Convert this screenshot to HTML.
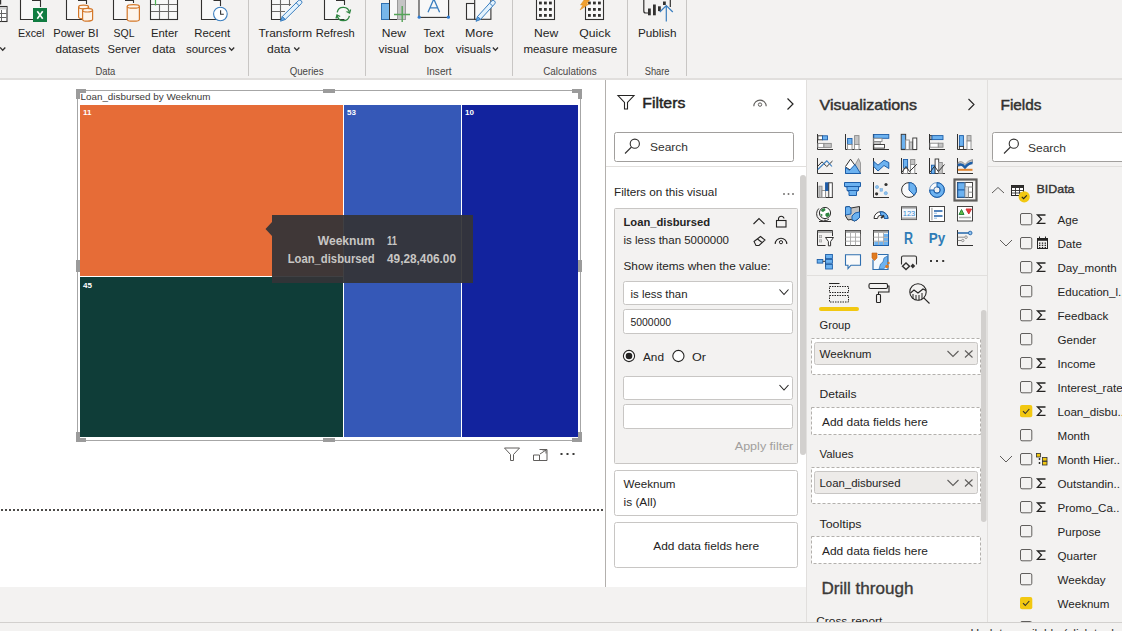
<!DOCTYPE html>
<html><head><meta charset="utf-8"><title>Power BI</title>
<style>
html,body{margin:0;padding:0;width:1122px;height:631px;overflow:hidden;background:#f3f2f1;}
svg{display:block;font-family:"Liberation Sans",sans-serif;}
</style></head><body>
<svg width="1122" height="631" viewBox="0 0 1122 631">
<rect x="0" y="0" width="1122" height="631" fill="#f3f2f1" rx="0" />
<rect x="0" y="78" width="1122" height="2" fill="#e1dfdd" rx="0" />
<rect x="0" y="80" width="605" height="507" fill="#ffffff" rx="0" />
<rect x="606" y="80" width="200" height="507" fill="#ffffff" rx="0" />
<rect x="605" y="80" width="1" height="507" fill="#b3b0ad" rx="0" />
<rect x="806" y="80" width="1" height="542" fill="#e1dfdd" rx="0" />
<rect x="987" y="80" width="1" height="542" fill="#e1dfdd" rx="0" />
<text x="18.1" y="36.8" font-size="11.6" fill="#252423" font-weight="normal" text-anchor="start" textLength="26.4" lengthAdjust="spacingAndGlyphs" >Excel</text>
<text x="53.2" y="36.8" font-size="11.6" fill="#252423" font-weight="normal" text-anchor="start" textLength="45.3" lengthAdjust="spacingAndGlyphs" >Power BI</text>
<text x="55.4" y="52.5" font-size="11.6" fill="#252423" font-weight="normal" text-anchor="start" textLength="44.1" lengthAdjust="spacingAndGlyphs" >datasets</text>
<text x="113.5" y="36.8" font-size="11.6" fill="#252423" font-weight="normal" text-anchor="start" textLength="21" lengthAdjust="spacingAndGlyphs" >SQL</text>
<text x="107.5" y="52.5" font-size="11.6" fill="#252423" font-weight="normal" text-anchor="start" textLength="33" lengthAdjust="spacingAndGlyphs" >Server</text>
<text x="151.0" y="36.8" font-size="11.6" fill="#252423" font-weight="normal" text-anchor="start" textLength="27.0" lengthAdjust="spacingAndGlyphs" >Enter</text>
<text x="152.3" y="52.5" font-size="11.6" fill="#252423" font-weight="normal" text-anchor="start" textLength="23.2" lengthAdjust="spacingAndGlyphs" >data</text>
<text x="194.2" y="36.8" font-size="11.6" fill="#252423" font-weight="normal" text-anchor="start" textLength="36.0" lengthAdjust="spacingAndGlyphs" >Recent</text>
<text x="185.9" y="52.5" font-size="11.6" fill="#252423" font-weight="normal" text-anchor="start" textLength="40.4" lengthAdjust="spacingAndGlyphs" >sources</text>
<text x="258.5" y="36.8" font-size="11.6" fill="#252423" font-weight="normal" text-anchor="start" textLength="53.5" lengthAdjust="spacingAndGlyphs" >Transform</text>
<text x="267.0" y="52.5" font-size="11.6" fill="#252423" font-weight="normal" text-anchor="start" textLength="23.5" lengthAdjust="spacingAndGlyphs" >data</text>
<text x="315.7" y="36.8" font-size="11.6" fill="#252423" font-weight="normal" text-anchor="start" textLength="39.0" lengthAdjust="spacingAndGlyphs" >Refresh</text>
<text x="381.8" y="36.8" font-size="11.6" fill="#252423" font-weight="normal" text-anchor="start" textLength="24.1" lengthAdjust="spacingAndGlyphs" >New</text>
<text x="378.5" y="52.5" font-size="11.6" fill="#252423" font-weight="normal" text-anchor="start" textLength="30.5" lengthAdjust="spacingAndGlyphs" >visual</text>
<text x="423.5" y="36.8" font-size="11.6" fill="#252423" font-weight="normal" text-anchor="start" textLength="20.8" lengthAdjust="spacingAndGlyphs" >Text</text>
<text x="424.3" y="52.5" font-size="11.6" fill="#252423" font-weight="normal" text-anchor="start" textLength="19.5" lengthAdjust="spacingAndGlyphs" >box</text>
<text x="465.1" y="36.8" font-size="11.6" fill="#252423" font-weight="normal" text-anchor="start" textLength="28.4" lengthAdjust="spacingAndGlyphs" >More</text>
<text x="455.7" y="52.5" font-size="11.6" fill="#252423" font-weight="normal" text-anchor="start" textLength="35.3" lengthAdjust="spacingAndGlyphs" >visuals</text>
<text x="534.1" y="36.8" font-size="11.6" fill="#252423" font-weight="normal" text-anchor="start" textLength="24.2" lengthAdjust="spacingAndGlyphs" >New</text>
<text x="523.4" y="52.5" font-size="11.6" fill="#252423" font-weight="normal" text-anchor="start" textLength="44.7" lengthAdjust="spacingAndGlyphs" >measure</text>
<text x="579.3" y="36.8" font-size="11.6" fill="#252423" font-weight="normal" text-anchor="start" textLength="31.2" lengthAdjust="spacingAndGlyphs" >Quick</text>
<text x="572.2" y="52.5" font-size="11.6" fill="#252423" font-weight="normal" text-anchor="start" textLength="45.0" lengthAdjust="spacingAndGlyphs" >measure</text>
<text x="637.9" y="36.8" font-size="11.6" fill="#252423" font-weight="normal" text-anchor="start" textLength="38.6" lengthAdjust="spacingAndGlyphs" >Publish</text>
<text x="95.4" y="75" font-size="10" fill="#484644" font-weight="normal" text-anchor="start" textLength="19.9" lengthAdjust="spacingAndGlyphs" >Data</text>
<text x="289.7" y="75" font-size="10" fill="#484644" font-weight="normal" text-anchor="start" textLength="33.9" lengthAdjust="spacingAndGlyphs" >Queries</text>
<text x="426.5" y="75" font-size="10" fill="#484644" font-weight="normal" text-anchor="start" textLength="25.1" lengthAdjust="spacingAndGlyphs" >Insert</text>
<text x="543.2" y="75" font-size="10" fill="#484644" font-weight="normal" text-anchor="start" textLength="53.5" lengthAdjust="spacingAndGlyphs" >Calculations</text>
<text x="644.7" y="75" font-size="10" fill="#484644" font-weight="normal" text-anchor="start" textLength="24.8" lengthAdjust="spacingAndGlyphs" >Share</text>
<rect x="248" y="0" width="1" height="76" fill="#c8c6c4" rx="0" />
<rect x="365" y="0" width="1" height="76" fill="#c8c6c4" rx="0" />
<rect x="512" y="0" width="1" height="76" fill="#c8c6c4" rx="0" />
<rect x="627" y="0" width="1" height="76" fill="#c8c6c4" rx="0" />
<rect x="686" y="0" width="1" height="76" fill="#c8c6c4" rx="0" />
<path d="M0.10000000000000009,47.5 L2.7,50.3 L5.300000000000001,47.5" stroke="#323130" fill="none" stroke-width="1.3" />
<path d="M229.0,47.5 L231.6,50.3 L234.2,47.5" stroke="#323130" fill="none" stroke-width="1.3" />
<path d="M294.2,47.5 L296.8,50.3 L299.40000000000003,47.5" stroke="#323130" fill="none" stroke-width="1.3" />
<path d="M492.79999999999995,47.5 L495.4,50.3 L498.0,47.5" stroke="#323130" fill="none" stroke-width="1.3" />
<rect x="-3" y="6.5" width="10" height="15" fill="#ffffff" stroke="#323130" stroke-width="1.1" rx="0" />
<rect x="-3" y="7" width="9.5" height="2.5" fill="#cfcfcf" rx="0" />
<path d="M1.5,10 V21.5 M-3,13.5 H6.5 M-3,17.5 H6.5" stroke="#666" fill="none" stroke-width="1" />
<path d="M20,-2 V19.5 H33 V8 H40.5 V-2 Z" fill="#f8f8f8"/>
<path d="M20.5,-1 V19.5 H33" stroke="#323130" fill="none" stroke-width="1.1" />
<path d="M40.5,7 V0.5 H32" stroke="#323130" fill="none" stroke-width="1.1" />
<rect x="33" y="8" width="14" height="14" fill="#107c41" rx="0" />
<path d="M37.3,11.2 L42.7,18.8 M42.7,11.2 L37.3,18.8" stroke="#ffffff" fill="none" stroke-width="1.6" />
<path d="M66,-2 V20 H87 V-2 Z" fill="#f8f8f8" stroke="none"/>
<path d="M66.5,-1 V19.5 H86.5" stroke="#323130" fill="none" stroke-width="1.1" />
<path d="M86.5,4 V0.5 H78" stroke="#323130" fill="none" stroke-width="1.1" />
<path d="M78.6,7.0 V17.0 A5.0,1.8 0 0 0 88.6,17.0 V7.0 A5.0,1.8 0 0 0 78.6,7.0 Z" fill="#fdf5ec" stroke="#d4782a" stroke-width="1.2"/>
<path d="M78.6,7.0 A5.0,1.8 0 0 0 88.6,7.0" fill="none" stroke="#d4782a" stroke-width="1.2"/>
<path d="M82.6,10.200000000000001 V19.4 A5.0,1.8 0 0 0 92.6,19.4 V10.200000000000001 A5.0,1.8 0 0 0 82.6,10.200000000000001 Z" fill="#fdf5ec" stroke="#d4782a" stroke-width="1.2"/>
<path d="M82.6,10.200000000000001 A5.0,1.8 0 0 0 92.6,10.200000000000001" fill="none" stroke="#d4782a" stroke-width="1.2"/>
<path d="M113,-2 V20 H134 V-2 Z" fill="#f8f8f8" stroke="none"/>
<path d="M113.5,-1 V19.5 H133.5" stroke="#323130" fill="none" stroke-width="1.1" />
<path d="M133.5,3 V0.5 H125" stroke="#323130" fill="none" stroke-width="1.1" />
<path d="M127.2,6.3999999999999995 V19.4 A6.100000000000001,1.8 0 0 0 139.4,19.4 V6.3999999999999995 A6.100000000000001,1.8 0 0 0 127.2,6.3999999999999995 Z" fill="#fdf5ec" stroke="#d4782a" stroke-width="1.2"/>
<path d="M127.2,6.3999999999999995 A6.100000000000001,1.8 0 0 0 139.4,6.3999999999999995" fill="none" stroke="#d4782a" stroke-width="1.2"/>
<rect x="150.5" y="-3" width="27" height="22.5" fill="#f8f8f8" stroke="#323130" stroke-width="1.1" rx="0" />
<path d="M151,4.5 H177 M151,11.5 H177 M159.5,4.5 V19 M168.5,-2 V19" stroke="#6b6a69" fill="none" stroke-width="1.1" />
<path d="M155.5,0 V5.5" stroke="#4caf50" fill="none" stroke-width="1.2" />
<path d="M201,-2 V20 H221 V-2 Z" fill="#f8f8f8" stroke="none"/>
<path d="M201.5,-1 V19.5 H220.5" stroke="#323130" fill="none" stroke-width="1.1" />
<path d="M220.5,6 V0.5 H213.5" stroke="#323130" fill="none" stroke-width="1.1" />
<circle cx="220.4" cy="14" r="6.8" fill="#ffffff" stroke="#3a7ebf" stroke-width="1.1"/>
<path d="M220.6,10.3 V14.3 H223.8" stroke="#323130" fill="none" stroke-width="1.1" />
<path d="M271,-2 V19.5 H291 V-2 Z" fill="#f8f8f8"/>
<path d="M271.5,-1 V19.5 H283" stroke="#323130" fill="none" stroke-width="1.1" />
<path d="M272,4.5 H291 M272,11.5 H285 M280.5,-1 V19 M289.5,-1 V6" stroke="#6b6a69" fill="none" stroke-width="1.1" />
<path d="M285.18,19.54 L301.27,3.70 A2.1,2.1 0 0 0 298.33,0.70 L282.23,16.55 Z" fill="#e3f2fd" stroke="#3a7ebf" stroke-width="1"/>
<path d="M280.50,21.20 L285.18,19.54 L282.23,16.55 Z" fill="#64a8e6" stroke="#3a7ebf" stroke-width="1"/>
<path d="M299.14,5.80 L296.19,2.81" stroke="#3a7ebf" fill="none" stroke-width="1" />
<path d="M324,-2 V20 H345 V-2 Z" fill="#f8f8f8" stroke="none"/>
<path d="M324.5,-1 V19.5 H344.5" stroke="#323130" fill="none" stroke-width="1.1" />
<path d="M344.5,5 V0.5 H336" stroke="#323130" fill="none" stroke-width="1.1" />
<path d="M337.2,12.3 A6.2,6.2 0 0 1 349.4,12.8" fill="none" stroke="#2e8540" stroke-width="1.3"/>
<path d="M349.4,15.8 A6.2,6.2 0 0 1 337.2,15.3" fill="none" stroke="#2e8540" stroke-width="1.3"/>
<path d="M346.5,11.5 L349.6,13 L350.6,9.5" stroke="#2e8540" fill="none" stroke-width="1.3" />
<path d="M340.2,16.5 L337,15 L336,18.5" stroke="#2e8540" fill="none" stroke-width="1.3" />
<rect x="381.5" y="3.5" width="8" height="16" fill="#77b6ea" stroke="#2f6fb0" stroke-width="1" rx="0" />
<rect x="389.5" y="-2" width="8" height="21.5" fill="#f8f8f8" stroke="#323130" stroke-width="1" rx="0" />
<rect x="397.5" y="-2" width="8" height="21.5" fill="#c4c4c4" stroke="#9a9a9a" stroke-width="1" rx="0" />
<path d="M394,14.5 H410 M402.2,6 V22" stroke="#54a357" fill="none" stroke-width="1.4" />
<rect x="419" y="-3" width="29.6" height="20.4" fill="#f8f8f8" stroke="#323130" stroke-width="1.1" rx="0" />
<path d="M428,12.2 L433.8,-1 L439.6,12.2 M430,7.8 H437.6" stroke="#3a7ebf" fill="none" stroke-width="1.3" />
<circle cx="419.2" cy="17.2" r="1.6" fill="#2f7bd0"/><circle cx="448.4" cy="17.2" r="1.6" fill="#2f7bd0"/>
<rect x="466.5" y="3.5" width="8.2" height="15.8" fill="#f8f8f8" stroke="#323130" stroke-width="1.1" rx="0" />
<rect x="474.7" y="-2" width="16.2" height="21.3" fill="#f8f8f8" stroke="#323130" stroke-width="1.1" rx="0" />
<path d="M480.58,19.39 L494.75,3.81 A2.1,2.1 0 0 0 491.65,0.99 L477.48,16.56 Z" fill="#e3f2fd" stroke="#3a7ebf" stroke-width="1"/>
<path d="M476.00,21.30 L480.58,19.39 L477.48,16.56 Z" fill="#64a8e6" stroke="#3a7ebf" stroke-width="1"/>
<path d="M492.73,6.03 L489.63,3.21" stroke="#3a7ebf" fill="none" stroke-width="1" />
<rect x="536.5" y="-3" width="18" height="22.5" fill="#f8f8f8" stroke="#323130" stroke-width="1.1" rx="0" />
<rect x="539" y="1.6" width="2.8" height="2.8" fill="#323130" rx="0" />
<rect x="544" y="1.6" width="2.8" height="2.8" fill="#323130" rx="0" />
<rect x="549" y="1.6" width="2.8" height="2.8" fill="#323130" rx="0" />
<rect x="539" y="8" width="2.8" height="2.8" fill="#323130" rx="0" />
<rect x="544" y="8" width="2.8" height="2.8" fill="#323130" rx="0" />
<rect x="549" y="8" width="2.8" height="2.8" fill="#323130" rx="0" />
<rect x="539" y="14" width="2.8" height="2.8" fill="#323130" rx="0" />
<rect x="544" y="14" width="2.8" height="2.8" fill="#323130" rx="0" />
<rect x="549" y="14" width="2.8" height="2.8" fill="#323130" rx="0" />
<rect x="585.5" y="-3" width="18" height="22.5" fill="#f8f8f8" stroke="#323130" stroke-width="1.1" rx="0" />
<rect x="588" y="1.6" width="2.8" height="2.8" fill="#323130" rx="0" />
<rect x="593" y="1.6" width="2.8" height="2.8" fill="#323130" rx="0" />
<rect x="598" y="1.6" width="2.8" height="2.8" fill="#323130" rx="0" />
<rect x="588" y="8" width="2.8" height="2.8" fill="#323130" rx="0" />
<rect x="593" y="8" width="2.8" height="2.8" fill="#323130" rx="0" />
<rect x="598" y="8" width="2.8" height="2.8" fill="#323130" rx="0" />
<rect x="588" y="14" width="2.8" height="2.8" fill="#323130" rx="0" />
<rect x="593" y="14" width="2.8" height="2.8" fill="#323130" rx="0" />
<rect x="598" y="14" width="2.8" height="2.8" fill="#323130" rx="0" />
<path d="M584,0 L589.5,0 L586.5,4 L589,4 L580,10 L583,5 L580.5,5 Z" fill="#f0a030" stroke="#d88a20" stroke-width="0.5"/>
<path d="M643.8,-1 V11 Q643.8,13 645.8,13 H648" stroke="#323130" fill="none" stroke-width="1.2" />
<path d="M670.3,-1 V7" stroke="#323130" fill="none" stroke-width="1.2" />
<rect x="648" y="8.5" width="2.8" height="6.8" fill="#323130" rx="0" />
<rect x="653" y="4.5" width="2.8" height="10.8" fill="#323130" rx="0" />
<rect x="658" y="6.3" width="2.8" height="4.8" fill="#323130" rx="0" />
<rect x="663" y="1.5" width="2.8" height="3.5" fill="#323130" rx="0" />
<path d="M666.3,5.5 V21.5 M659.8,12 L666.3,5.5 L672.8,12" stroke="#3a7ebf" fill="none" stroke-width="1.2" />
<rect x="0" y="0" width="1.2" height="4.5" fill="#323130" rx="0" />
<line x1="0" y1="510" x2="603" y2="510" stroke="#4d4b49" stroke-width="2" stroke-dasharray="2,2" stroke-dashoffset="3"/>
<text x="80.5" y="99.8" font-size="9.6" fill="#3b3a39" font-weight="normal" text-anchor="start" textLength="130" lengthAdjust="spacingAndGlyphs" >Loan_disbursed by Weeknum</text>
<rect x="77.5" y="90.5" width="503" height="350" fill="none" stroke="#a6a6a6" stroke-width="1" rx="0" />
<rect x="80" y="105" width="263" height="171" fill="#e66c37" rx="0" />
<rect x="80" y="277" width="263" height="160" fill="#0f3d38" rx="0" />
<rect x="344" y="105" width="117" height="332" fill="#3558b7" rx="0" />
<rect x="462" y="105" width="116" height="332" fill="#12239e" rx="0" />
<text x="83" y="115" font-size="8" fill="#ffffff" font-weight="bold" text-anchor="start" >11</text>
<text x="347" y="115" font-size="8" fill="#ffffff" font-weight="bold" text-anchor="start" >53</text>
<text x="465" y="115" font-size="8" fill="#ffffff" font-weight="bold" text-anchor="start" >10</text>
<text x="83" y="288" font-size="8" fill="#ffffff" font-weight="bold" text-anchor="start" >45</text>
<rect x="76" y="89" width="10" height="4" fill="#9b9b9b" rx="0" />
<rect x="76" y="89" width="4" height="10" fill="#9b9b9b" rx="0" />
<rect x="323" y="89" width="12" height="4" fill="#9b9b9b" rx="0" />
<rect x="572" y="89" width="10" height="4" fill="#9b9b9b" rx="0" />
<rect x="578" y="89" width="4" height="10" fill="#9b9b9b" rx="0" />
<rect x="76" y="260" width="4" height="12" fill="#9b9b9b" rx="0" />
<rect x="578" y="260" width="4" height="12" fill="#9b9b9b" rx="0" />
<rect x="76" y="432" width="4" height="10" fill="#9b9b9b" rx="0" />
<rect x="76" y="438" width="10" height="4" fill="#9b9b9b" rx="0" />
<rect x="323" y="438" width="12" height="4" fill="#9b9b9b" rx="0" />
<rect x="578" y="432" width="4" height="10" fill="#9b9b9b" rx="0" />
<rect x="572" y="438" width="10" height="4" fill="#9b9b9b" rx="0" />
<path d="M272,215 H473 V283 H272 V236 L265.5,229 L272,222 Z" fill="rgb(52,52,55)" fill-opacity="0.94"/>
<text x="374.7" y="245" font-size="12.4" fill="#c8c6c4" font-weight="bold" text-anchor="end" textLength="57" lengthAdjust="spacingAndGlyphs" >Weeknum</text>
<text x="374.7" y="263" font-size="12.4" fill="#c8c6c4" font-weight="bold" text-anchor="end" textLength="87" lengthAdjust="spacingAndGlyphs" >Loan_disbursed</text>
<text x="387" y="245" font-size="12.4" fill="#c8c6c4" font-weight="bold" text-anchor="start" textLength="10" lengthAdjust="spacingAndGlyphs" >11</text>
<text x="387" y="263" font-size="12.4" fill="#c8c6c4" font-weight="bold" text-anchor="start" textLength="69" lengthAdjust="spacingAndGlyphs" >49,28,406.00</text>
<path d="M504.5,448 H519.5 L513.5,454.5 V460.5 H510.5 V454.5 Z" stroke="#605e5c" fill="none" stroke-width="1" />
<path d="M533.5,455 V460.5 H547 V449.5 H539.5 M533.5,455 H539.5 V460.5 M540,454 L546,450 M542.5,450 H546 V453.5" stroke="#605e5c" fill="none" stroke-width="1" />
<rect x="560.5" y="453" width="2" height="2" fill="#3b3a39" rx="0" />
<rect x="566.5" y="453" width="2" height="2" fill="#3b3a39" rx="0" />
<rect x="572.5" y="453" width="2" height="2" fill="#3b3a39" rx="0" />
<path d="M618,95.5 H634 L627.5,102.5 V109 H624.5 V102.5 Z" stroke="#252423" fill="none" stroke-width="1.1" />
<text x="642.3" y="107.7" font-size="14.3" fill="#252423" font-weight="normal" text-anchor="start" textLength="43" lengthAdjust="spacingAndGlyphs" stroke="#252423" stroke-width="0.45">Filters</text>
<path d="M753.8,106.3 A6.2,6.2 0 0 1 766.2,106.3" stroke="#605e5c" fill="none" stroke-width="1.1" />
<circle cx="760" cy="104.6" r="1.7" fill="none" stroke="#605e5c" stroke-width="1"/>
<path d="M787.5,98.5 L793,104 L787.5,109.5" stroke="#252423" fill="none" stroke-width="1.2" />
<rect x="614.5" y="132.5" width="179" height="29" fill="#ffffff" stroke="#a19f9d" stroke-width="1" rx="2" />
<circle cx="634.8" cy="143.7" r="4.6" fill="none" stroke="#323130" stroke-width="1.1"/>
<path d="M631.5,147 L625,153.5" stroke="#323130" fill="none" stroke-width="1.1" />
<text x="650" y="150.7" font-size="11.6" fill="#323130" font-weight="normal" text-anchor="start" textLength="38" lengthAdjust="spacingAndGlyphs" >Search</text>
<rect x="606" y="166" width="200" height="1" fill="#e1dfdd" rx="0" />
<text x="614" y="196" font-size="11.6" fill="#252423" font-weight="normal" text-anchor="start" textLength="103" lengthAdjust="spacingAndGlyphs" >Filters on this visual</text>
<rect x="783.2" y="193.2" width="1.6" height="1.6" fill="#605e5c" rx="0" />
<rect x="787.7" y="193.2" width="1.6" height="1.6" fill="#605e5c" rx="0" />
<rect x="792.2" y="193.2" width="1.6" height="1.6" fill="#605e5c" rx="0" />
<rect x="800" y="175" width="6" height="280" fill="#d2d0ce" rx="3" />
<rect x="614.5" y="208.5" width="183" height="255" fill="#f3f2f1" stroke="#c8c6c4" stroke-width="1" rx="1" />
<text x="623.5" y="226" font-size="11.6" fill="#252423" font-weight="bold" text-anchor="start" textLength="86.5" lengthAdjust="spacingAndGlyphs" >Loan_disbursed</text>
<text x="623.5" y="244" font-size="11.6" fill="#252423" font-weight="normal" text-anchor="start" textLength="105.5" lengthAdjust="spacingAndGlyphs" >is less than 5000000</text>
<path d="M753.5,224 L759,218.5 L764.5,224" stroke="#252423" fill="none" stroke-width="1.1" />
<rect x="776.5" y="220.5" width="9.5" height="6.5" fill="none" stroke="#252423" stroke-width="1.1"/>
<path d="M778.5,220.5 V218.5 A2.8,2.8 0 0 1 784,218.5" stroke="#252423" fill="none" stroke-width="1.1" />
<path d="M754,241.5 L760.5,236.5 L765,240 L759,245.5 H756 Z M757.5,239 L762,242.5" stroke="#252423" fill="none" stroke-width="1.05" />
<path d="M775.2,244 A5.8,5.8 0 0 1 786.8,244" stroke="#252423" fill="none" stroke-width="1.05" />
<circle cx="781" cy="242.2" r="1.6" fill="none" stroke="#252423" stroke-width="1"/>
<text x="623.5" y="270" font-size="11.6" fill="#252423" font-weight="normal" text-anchor="start" textLength="147" lengthAdjust="spacingAndGlyphs" >Show items when the value:</text>
<rect x="623.5" y="281.5" width="169" height="23" fill="#ffffff" stroke="#c8c6c4" stroke-width="1" rx="2" />
<text x="630.5" y="298" font-size="11.6" fill="#252423" font-weight="normal" text-anchor="start" textLength="57" lengthAdjust="spacingAndGlyphs" >is less than</text>
<path d="M779.5,289.5 L784,294.5 L788.5,289.5" stroke="#252423" fill="none" stroke-width="1.1" />
<rect x="623.5" y="309.5" width="169" height="24" fill="#ffffff" stroke="#c8c6c4" stroke-width="1" rx="2" />
<text x="630.5" y="325.7" font-size="11.6" fill="#252423" font-weight="normal" text-anchor="start" textLength="40.5" lengthAdjust="spacingAndGlyphs" >5000000</text>
<circle cx="629" cy="356" r="5.6" fill="#ffffff" stroke="#252423" stroke-width="1.1"/>
<circle cx="629" cy="356" r="3.3" fill="#252423"/>
<text x="643" y="361" font-size="11.6" fill="#252423" font-weight="normal" text-anchor="start" textLength="21" lengthAdjust="spacingAndGlyphs" >And</text>
<circle cx="678.4" cy="356" r="5.6" fill="#ffffff" stroke="#252423" stroke-width="1.1"/>
<text x="692" y="361" font-size="11.6" fill="#252423" font-weight="normal" text-anchor="start" textLength="14" lengthAdjust="spacingAndGlyphs" >Or</text>
<rect x="623.5" y="376.5" width="169" height="23" fill="#ffffff" stroke="#c8c6c4" stroke-width="1" rx="2" />
<path d="M779.5,385 L784,390 L788.5,385" stroke="#252423" fill="none" stroke-width="1.1" />
<rect x="623.5" y="404.5" width="169" height="24" fill="#ffffff" stroke="#c8c6c4" stroke-width="1" rx="2" />
<text x="734.8" y="449.5" font-size="11.6" fill="#a19f9d" font-weight="normal" text-anchor="start" textLength="58.5" lengthAdjust="spacingAndGlyphs" >Apply filter</text>
<rect x="614.5" y="470.5" width="183" height="45" fill="#ffffff" stroke="#c8c6c4" stroke-width="1" rx="2" />
<text x="623.5" y="488" font-size="11.6" fill="#252423" font-weight="normal" text-anchor="start" textLength="52" lengthAdjust="spacingAndGlyphs" >Weeknum</text>
<text x="623.5" y="506" font-size="11.6" fill="#252423" font-weight="normal" text-anchor="start" textLength="33" lengthAdjust="spacingAndGlyphs" >is (All)</text>
<rect x="614.5" y="522.5" width="183" height="45" fill="#ffffff" stroke="#c8c6c4" stroke-width="1" rx="2" />
<text x="653.2" y="550" font-size="11.6" fill="#252423" font-weight="normal" text-anchor="start" textLength="106" lengthAdjust="spacingAndGlyphs" >Add data fields here</text>
<text x="819.5" y="109.6" font-size="14.5" fill="#323130" font-weight="normal" text-anchor="start" textLength="97.5" lengthAdjust="spacingAndGlyphs" stroke="#323130" stroke-width="0.45">Visualizations</text>
<path d="M968.5,99 L974,104.5 L968.5,110" stroke="#252423" fill="none" stroke-width="1.1" />
<g transform="translate(817,134)"><path d="M0.5,0 V15.5 H16" stroke="#323130" fill="none" stroke-width="1"/><rect x="0.9" y="1.8" width="4.6" height="4" fill="#ffffff" stroke="#323130" stroke-width="0.9"/><rect x="5.5" y="1.8" width="5" height="4" fill="#6cb2f0" stroke="#1d5ea8" stroke-width="0.9"/><rect x="0.9" y="9.4" width="6" height="4" fill="#ffffff" stroke="#8a8a8a" stroke-width="0.9"/><rect x="6.9" y="9.4" width="7.4" height="4" fill="#c4c4c4" stroke="#8a8a8a" stroke-width="0.9"/></g>
<g transform="translate(845,134)"><path d="M0.5,0 V15.5 H16" stroke="#323130" fill="none" stroke-width="1"/><rect x="2.6" y="4.5" width="4.4" height="6" fill="#6cb2f0" stroke="#1d5ea8" stroke-width="0.9"/><rect x="2.6" y="10.5" width="4.4" height="5" fill="#ffffff" stroke="#8a8a8a" stroke-width="0.9"/><rect x="9.6" y="1.6" width="4.4" height="9" fill="#c4c4c4" stroke="#8a8a8a" stroke-width="0.9"/><rect x="9.6" y="10.5" width="4.4" height="5" fill="#ffffff" stroke="#8a8a8a" stroke-width="0.9"/></g>
<g transform="translate(873,134)"><path d="M0.5,0 V15.5 H16" stroke="#323130" fill="none" stroke-width="1.2"/><rect x="0.8" y="0.5" width="15" height="3.8" fill="#6cb2f0" stroke="#1d5ea8" stroke-width="0.9"/><rect x="0.8" y="4.3" width="8.2" height="3.2" fill="#ffffff" stroke="#8a8a8a" stroke-width="0.9"/><rect x="0.8" y="7.5" width="6.5" height="3" fill="#c4c4c4" stroke="#8a8a8a" stroke-width="0.9"/><rect x="0.8" y="10.5" width="10.7" height="3.6" fill="#ffffff" stroke="#323130" stroke-width="0.9"/></g>
<g transform="translate(901,134)"><path d="M0,15.5 H16" stroke="#323130" fill="none" stroke-width="1.2"/><rect x="0.2" y="0.3" width="4.5" height="15" fill="#6cb2f0" stroke="#323130" stroke-width="0.9"/><rect x="4.7" y="6" width="3.6" height="9.5" fill="#ffffff" stroke="#8a8a8a" stroke-width="0.9"/><rect x="8.3" y="8" width="3.5" height="7.5" fill="#c4c4c4" stroke="#8a8a8a" stroke-width="0.9"/><rect x="11.8" y="4" width="4" height="11.5" fill="#ffffff" stroke="#323130" stroke-width="0.9"/></g>
<g transform="translate(929,134)"><path d="M0.5,0 V15.5 H16" stroke="#323130" fill="none" stroke-width="1"/><rect x="1" y="1.6" width="2" height="4" fill="#ffffff" stroke="#323130" stroke-width="0.9"/><rect x="3" y="1.6" width="11" height="4" fill="#6cb2f0" stroke="#1d5ea8" stroke-width="0.9"/><rect x="1" y="9.2" width="8.3" height="4" fill="#ffffff" stroke="#8a8a8a" stroke-width="0.9"/><rect x="9.3" y="9.2" width="4.7" height="4" fill="#c4c4c4" stroke="#8a8a8a" stroke-width="0.9"/></g>
<g transform="translate(957,134)"><path d="M0.5,0 V15.5 H16" stroke="#323130" fill="none" stroke-width="1"/><rect x="2.4" y="1.6" width="4" height="10.8" fill="#6cb2f0" stroke="#1d5ea8" stroke-width="0.9"/><rect x="2.4" y="12.4" width="4" height="3.1" fill="#ffffff" stroke="#323130" stroke-width="0.9"/><rect x="10" y="1.6" width="4" height="5.4" fill="#c4c4c4" stroke="#8a8a8a" stroke-width="0.9"/><rect x="10" y="7" width="4" height="8.5" fill="#ffffff" stroke="#8a8a8a" stroke-width="0.9"/></g>
<g transform="translate(817,158)"><path d="M0.5,0 V15.5 H16" stroke="#323130" fill="none" stroke-width="1"/><path d="M0.5,8.5 L5,3.8 L9.8,8.6 L15.5,3" stroke="#323130" fill="none" stroke-width="1"/><path d="M0.8,11.5 L9.8,2.8 L15,8.5" stroke="#3a7ebf" fill="none" stroke-width="1.1"/></g>
<g transform="translate(845,158)"><path d="M0.5,15.5 H16" stroke="#323130" fill="none" stroke-width="1"/><path d="M10,7 L13.5,0.5 L15.5,5 V15.5 H10 Z" stroke="#8a8a8a" fill="#c4c4c4" stroke-width="0.8"/><path d="M0.5,8.5 L5.5,1.2 L10.5,8 L6,12.5 L0.5,9" stroke="#323130" fill="#ffffff" stroke-width="1"/><path d="M0.5,9.5 L4.5,12.3 L10,6.5 L15.5,15.5 H0.5 Z" stroke="#1d5ea8" fill="#6cb2f0" stroke-width="1"/></g>
<g transform="translate(873,158)"><path d="M0.5,0 V15.5 H16" stroke="#323130" fill="none" stroke-width="1"/><path d="M0.8,3.5 L5,7.2 L11,2.2 L15.8,4.5 V10.5 L11,7.5 L5,13 L0.8,8.5 Z" stroke="#1d5ea8" fill="#6cb2f0" stroke-width="1"/></g>
<g transform="translate(901,158)"><path d="M0.5,0 V15.5 H16" stroke="#323130" fill="none" stroke-width="1"/><rect x="2.4" y="1.5" width="4.2" height="9" fill="#6cb2f0" stroke="#1d5ea8" stroke-width="0.9"/><rect x="2.4" y="10.5" width="4.2" height="5" fill="#ffffff" stroke="#8a8a8a" stroke-width="0.9"/><rect x="9.6" y="1.5" width="4.2" height="5" fill="#c4c4c4" stroke="#8a8a8a" stroke-width="0.9"/><rect x="9.6" y="6.5" width="4.2" height="9" fill="#ffffff" stroke="#8a8a8a" stroke-width="0.9"/><path d="M0.8,14.5 L5,8.5 L8.5,13.5 L15.8,6.2" stroke="#323130" fill="none" stroke-width="1"/></g>
<g transform="translate(929,158)"><path d="M0.5,0 V15.5 H16" stroke="#323130" fill="none" stroke-width="1"/><rect x="2.5" y="7.2" width="3.6" height="8.3" fill="#6cb2f0" stroke="#1d5ea8" stroke-width="0.9"/><rect x="6.1" y="1" width="3.6" height="14.5" fill="#ffffff" stroke="#323130" stroke-width="0.9"/><rect x="9.7" y="4.5" width="3.6" height="11" fill="#c4c4c4" stroke="#8a8a8a" stroke-width="0.9"/><path d="M0.8,14.5 L5.5,8.2 L9.3,13.5 L15.5,6.5" stroke="#323130" fill="none" stroke-width="1"/></g>
<g transform="translate(957,158)"><path d="M0.5,0 V15.5 H16" stroke="#323130" fill="none" stroke-width="1"/><path d="M1,4.5 Q5,2 8,6.5 Q11,2.5 15.5,1.5 V5 Q11,6 8,10 Q5,6 1,8 Z" stroke="#8a8a8a" fill="#c4c4c4" stroke-width="0.8"/><path d="M1,7.5 Q4.5,5 8,9.5 Q11.5,5 15.5,5" stroke="#1d5ea8" fill="none" stroke-width="2.4"/><path d="M1,11.8 H15.5" stroke="#e0842f" fill="none" stroke-width="2"/></g>
<g transform="translate(817,182)"><path d="M0.5,0 V15.5 H16" stroke="#323130" fill="none" stroke-width="1"/><rect x="2" y="4.2" width="3" height="11.3" fill="#c4c4c4" stroke="#8a8a8a" stroke-width="0.9"/><rect x="5" y="8.5" width="3.5" height="7" fill="#ffffff" stroke="#8a8a8a" stroke-width="0.9"/><rect x="8.5" y="0.8" width="3.3" height="7.7" fill="#1f5aa6" stroke="#1d5ea8" stroke-width="0.9"/><rect x="11.8" y="0.8" width="3.5" height="14.7" fill="#ffffff" stroke="#323130" stroke-width="0.9"/></g>
<g transform="translate(845,182)"><path d="M-0.5,0.5 H15.5 V4.5 L13.5,5 V8.5 L11.5,9.5 V13.5 H4 V9.5 L2,8.5 V5 L-0.5,4.5 Z" stroke="#1d5ea8" fill="#6cb2f0" stroke-width="1"/><path d="M0,4.5 H15 M2,8.5 H13.5" stroke="#1d5ea8" fill="none" stroke-width="1"/></g>
<g transform="translate(873,182)"><path d="M0.5,0 V15.5 H16" stroke="#323130" fill="none" stroke-width="1"/><circle cx="13" cy="2.5" r="1.6" fill="#323130"/><circle cx="4" cy="5" r="1.6" fill="#8fc1ee" stroke="#6aa6da" stroke-width="0.6"/><rect x="7" y="6.6" width="2.6" height="2.6" fill="#8fc1ee" stroke="#6aa6da" stroke-width="0.5"/><circle cx="3.6" cy="11.8" r="1.6" fill="#323130"/><circle cx="12.8" cy="11.2" r="1.6" fill="#8fc1ee" stroke="#6aa6da" stroke-width="0.6"/></g>
<g transform="translate(901,182)"><circle cx="8" cy="8" r="7.4" fill="#fafafa" stroke="#323130" stroke-width="1"/><path d="M8,8 V0.6 A7.4,7.4 0 0 1 13.2,13.3 Z" stroke="#1d5ea8" fill="#6cb2f0" stroke-width="1"/></g>
<g transform="translate(929,182)"><circle cx="8" cy="8" r="5.4" fill="none" stroke="#fafafa" stroke-width="4"/><path d="M8,0.6 A7.4,7.4 0 1 1 0.6,8 H4.8 A3.2,3.2 0 1 0 8,4.8 Z" stroke="#1d5ea8" fill="#6cb2f0" stroke-width="1"/><circle cx="8" cy="8" r="7.4" fill="none" stroke="#1d5ea8" stroke-width="0.6"/><circle cx="8" cy="8" r="3.2" fill="none" stroke="#1d5ea8" stroke-width="0.8"/></g>
<rect x="954.5" y="179.5" width="22" height="21" fill="none" stroke="#605e5c" stroke-width="2.2" rx="0" />
<g transform="translate(957,182)"><rect x="0.5" y="0.5" width="15" height="15" fill="#ffffff" stroke="#323130" stroke-width="0.9"/><rect x="0.8" y="0.8" width="7.2" height="7.2" fill="#6cb2f0" stroke="#1d5ea8" stroke-width="0.9"/><rect x="0.8" y="8" width="7.2" height="7.2" fill="#6cb2f0" stroke="#1d5ea8" stroke-width="0.9"/><path d="M8,0.5 V15.5 M11.5,5 V15.5 M8,5 H15.5 M11.5,10.2 H15.5" stroke="#8a8a8a" fill="none" stroke-width="1"/><rect x="8.4" y="5.3" width="2.7" height="9.8" fill="#dcdcdc"/></g>
<g transform="translate(817,206)"><circle cx="8" cy="7" r="5.6" fill="#ffffff" stroke="#323130" stroke-width="1"/><path d="M4.5,3.6 Q6,2 8,2.3 L8.5,4.2 L6,6 L4,5 Z M8.8,7.2 L12,6.5 L12.8,9.6 L10,11.2 L8.2,9.3 Z M3,7.5 L5.5,8.5 L5,11 Z" fill="#2e8540"/><path d="M1.8,2.5 A7,7 0 0 0 12,13 M8,13.5 V15 M2,15.5 H14" stroke="#323130" fill="none" stroke-width="1"/></g>
<g transform="translate(845,206)"><path d="M0.5,1 L4,0.5 L6,2 L14.5,0.5 V11.5 L12,13.8 L9.5,15 L6,13.5 L3,14 L0.5,10 Z" stroke="#323130" fill="#c4c4c4" stroke-width="1"/><path d="M0.5,1 L4,0.5 L6,2 L6,8 L0.5,9 Z" stroke="#1d5ea8" fill="#6cb2f0" stroke-width="1"/><path d="M7,10 L10,7 L14.5,6 V11.5 L12,13.8 L9.5,15 L7,13.5 Z" stroke="#1d5ea8" fill="#6cb2f0" stroke-width="1"/></g>
<g transform="translate(873,206)"><path d="M1,12.5 A7,6.8 0 0 1 15,12.5 H11.5 A3.5,3.3 0 0 0 4.5,12.5 Z" stroke="#323130" fill="#ffffff" stroke-width="1"/><path d="M7,5.8 A7,6.8 0 0 1 15,12.5 H11.5 A3.5,3.3 0 0 0 8,9.2 Z" stroke="#1d5ea8" fill="#6cb2f0" stroke-width="1"/><path d="M8,12 L11,9.5" stroke="#323130" fill="none" stroke-width="1.8"/></g>
<g transform="translate(901,206)"><rect x="0.5" y="0.8" width="15" height="12.8" fill="#f4f8fc" stroke="#323130" stroke-width="0.9"/><rect x="0.8" y="0.8" width="14.5" height="1.8" fill="#9a9a9a"/><rect x="0.8" y="11.4" width="14.5" height="2" fill="#b0b0b0"/><text x="8" y="10.2" font-size="7.5" text-anchor="middle" fill="#3a8ad0">123</text></g>
<g transform="translate(929,206)"><rect x="0.5" y="0.5" width="15" height="15" fill="#ffffff" stroke="#323130" stroke-width="0.9"/><rect x="2" y="1.8" width="1.8" height="12.5" fill="#c0c0c0"/><path d="M5,5 H13.5 M5,10 H13.5" stroke="#1d5ea8" fill="none" stroke-width="1.6"/><path d="M5,7.2 H8 M5,12.2 H8" stroke="#8fb8e0" fill="none" stroke-width="1"/></g>
<g transform="translate(957,206)"><rect x="0.5" y="0.5" width="15" height="14.5" fill="#ffffff" stroke="#323130" stroke-width="0.9"/><path d="M2,8.5 L4.5,3.5 L7,8.5 Z" stroke="#2e8540" fill="#62bb46" stroke-width="1"/><path d="M9,3 H14.5 L11.8,8 Z" stroke="#d13438" fill="#e83a3a" stroke-width="1"/><path d="M2,11.5 H14" stroke="#b0b0b0" fill="none" stroke-width="1.5"/></g>
<g transform="translate(817,230)"><path d="M0.5,15.5 V0.5 H15.5 V6" stroke="#323130" fill="none" stroke-width="1"/><rect x="0.9" y="1" width="14.3" height="2" fill="#a6a6a6"/><path d="M0.5,15.5 H8.5" stroke="#323130" fill="none" stroke-width="1"/><rect x="2.5" y="5.5" width="2.2" height="2.2" fill="#d8d8d8" stroke="#9a9a9a" stroke-width="0.6"/><rect x="2.5" y="9.8" width="2.2" height="2.2" fill="#d8d8d8" stroke="#9a9a9a" stroke-width="0.6"/><path d="M8.5,7.5 H16.5 L13.6,11.5 V15.8 H11.4 V11.5 Z" stroke="#323130" fill="#ffffff" stroke-width="1"/></g>
<g transform="translate(845,230)"><rect x="0.5" y="0.5" width="15" height="15" fill="#ffffff" stroke="#323130" stroke-width="0.9"/><rect x="0.8" y="0.8" width="14.4" height="2" fill="#9f9f9f"/><rect x="1.3" y="3.8" width="4.3" height="3.5" fill="#ffffff"/><rect x="1.3" y="7.699999999999999" width="4.3" height="3.5" fill="#ffffff"/><rect x="1.3" y="11.6" width="4.3" height="3.5" fill="#ffffff"/><rect x="6.1" y="3.8" width="4.3" height="3.5" fill="#ffffff"/><rect x="6.1" y="7.699999999999999" width="4.3" height="3.5" fill="#ffffff"/><rect x="6.1" y="11.6" width="4.3" height="3.5" fill="#ffffff"/><rect x="10.9" y="3.8" width="4.3" height="3.5" fill="#ffffff"/><rect x="10.9" y="7.699999999999999" width="4.3" height="3.5" fill="#ffffff"/><rect x="10.9" y="11.6" width="4.3" height="3.5" fill="#ffffff"/><path d="M5.5,3 V15.5 M10.5,3 V15.5 M0.5,7.2 H15.5 M0.5,11.2 H15.5" stroke="#a8a8a8" fill="none" stroke-width="0.9"/></g>
<g transform="translate(873,230)"><rect x="0.5" y="0.5" width="15" height="15" fill="#ffffff" stroke="#323130" stroke-width="0.9"/><rect x="0.8" y="0.8" width="14.4" height="2" fill="#9f9f9f"/><rect x="1.3" y="3.8" width="4.3" height="3.5" fill="#ffffff"/><rect x="1.3" y="7.699999999999999" width="4.3" height="3.5" fill="#ffffff"/><rect x="1.3" y="11.6" width="4.3" height="3.5" fill="#6cb2f0"/><rect x="6.1" y="3.8" width="4.3" height="3.5" fill="#ffffff"/><rect x="6.1" y="7.699999999999999" width="4.3" height="3.5" fill="#ffffff"/><rect x="6.1" y="11.6" width="4.3" height="3.5" fill="#6cb2f0"/><rect x="10.9" y="3.8" width="4.3" height="3.5" fill="#6cb2f0"/><rect x="10.9" y="7.699999999999999" width="4.3" height="3.5" fill="#6cb2f0"/><rect x="10.9" y="11.6" width="4.3" height="3.5" fill="#6cb2f0"/><path d="M5.5,3 V15.5 M10.5,3 V15.5 M0.5,7.2 H15.5 M0.5,11.2 H15.5" stroke="#a8a8a8" fill="none" stroke-width="0.9"/><path d="M0.5,15.5 H15.5 M15.5,0.5 V15.5" stroke="#1d5ea8" fill="none" stroke-width="1"/></g>
<g transform="translate(901,230)"><text x="7.4" y="13.9" font-size="16" font-weight="bold" text-anchor="middle" fill="#2f7cb6" textLength="9" lengthAdjust="spacingAndGlyphs">R</text></g>
<g transform="translate(929,230)"><text x="-0.3" y="13" font-size="15.5" font-weight="bold" fill="#2f7cb6" textLength="16.5" lengthAdjust="spacingAndGlyphs">Py</text></g>
<g transform="translate(957,230)"><path d="M0.5,0 V15.5 H16" stroke="#323130" fill="none" stroke-width="1"/><path d="M0.8,3 H11.5" stroke="#2f6fb0" fill="none" stroke-width="1.6"/><circle cx="13.2" cy="3" r="1.8" fill="#8fc1ee" stroke="#2f6fb0" stroke-width="1"/><path d="M0.8,7.2 H7.5 M0.8,10.5 H4.5" stroke="#8a8a8a" fill="none" stroke-width="1"/><circle cx="9" cy="7.2" r="1.3" fill="none" stroke="#8a8a8a" stroke-width="0.9"/><circle cx="5.8" cy="10.5" r="1.2" fill="none" stroke="#8a8a8a" stroke-width="0.9"/></g>
<g transform="translate(817,254)"><rect x="0.2" y="5.5" width="5.6" height="3.6" fill="#6cb2f0" stroke="#1d5ea8" stroke-width="0.9"/><path d="M5.8,7.3 H8.5 M8.5,2.5 V13" stroke="#323130" fill="none" stroke-width="1"/><rect x="8.6" y="0.5" width="6.8" height="4" fill="#6cb2f0" stroke="#1d5ea8" stroke-width="0.9"/><rect x="8.6" y="5.5" width="6.8" height="3.8" fill="#6cb2f0" stroke="#1d5ea8" stroke-width="0.9"/><rect x="8.6" y="10.5" width="6.8" height="4.5" fill="#6cb2f0" stroke="#1d5ea8" stroke-width="0.9"/></g>
<g transform="translate(845,254)"><path d="M0.5,0.8 H15.5 V11.2 H6 L3,14.5 V11.2 H0.5 Z" stroke="#2f6fb0" fill="#fafafa" stroke-width="1.1"/></g>
<g transform="translate(873,254)"><path d="M0,5.5 V15.5 H15 V0.5 H5" stroke="#2f6fb0" fill="#f2f8fd" stroke-width="1.2"/><path d="M6,15 L7.5,10 L10,8 L11,4 L14.5,2 V11 L10.5,15 Z" stroke="#2f6fb0" fill="#6cb2f0" stroke-width="0.7"/><path d="M-1,-1 H4 V4 L1.5,6.5 L-1,4 Z" stroke="#c55a11" fill="#e07b20" stroke-width="0.6"/><circle cx="14" cy="12.5" r="1.8" fill="#e07b20"/><circle cx="15.5" cy="9" r="1.2" fill="#e07b20"/></g>
<g transform="translate(901,254)"><path d="M0.5,10.5 V3.5 Q0.5,2 2,2 H14 Q15.5,2 15.5,3.5 V10.5" stroke="#323130" fill="none" stroke-width="1.1"/><path d="M1.5,12.2 L5,9 L8.5,12.2 L5,15.5 Z" stroke="#323130" fill="none" stroke-width="1.4"/><path d="M9.5,12 L11.8,9.6 L14.2,12 L11.8,14.4 Z" fill="#323130"/></g>
<rect x="930" y="260" width="2" height="2" fill="#3b3a39" rx="0" />
<rect x="936" y="260" width="2" height="2" fill="#3b3a39" rx="0" />
<rect x="942.2" y="260" width="2" height="2" fill="#3b3a39" rx="0" />
<rect x="807" y="275" width="180" height="1" fill="#e1dfdd" rx="0" />
<g fill="none" stroke="#252423" stroke-width="1"><path d="M829,283.5 H839.5"/><rect x="829.5" y="286.5" width="19" height="6" stroke-dasharray="1.5,1"/><rect x="829.5" y="295.5" width="19" height="6.5" stroke-dasharray="1.5,1"/></g>
<path d="M870.5,283.5 H886 A1.5,1.5 0 0 1 887.5,285 V287 A1.5,1.5 0 0 1 886,288.5 H870.5 A1.5,1.5 0 0 1 869,287 V285 A1.5,1.5 0 0 1 870.5,283.5 Z" stroke="#252423" fill="none" stroke-width="1.1" />
<path d="M887.5,286 H889 V292 H878.5 V294" stroke="#252423" fill="none" stroke-width="1.1" />
<rect x="876.5" y="294.5" width="4" height="8" fill="none" stroke="#252423" stroke-width="1.1" rx="0.8" />
<circle cx="918" cy="292" r="8.2" fill="none" stroke="#252423" stroke-width="1.1"/>
<path d="M910.5,293 L914,290 L918,293 L923,289 L926,290.5" stroke="#252423" fill="none" stroke-width="1.1" />
<path d="M913,294 V299 M916,295 V300 M919,295 V300.5 M922,293 V299" stroke="#252423" fill="none" stroke-width="1" />
<path d="M923.8,297.8 L929.5,303.5" stroke="#252423" fill="none" stroke-width="1.1" />
<rect x="819" y="307" width="40" height="4" fill="#f2c811" rx="2" />
<rect x="981" y="310" width="5.5" height="212" fill="#d2d0ce" rx="2.7" />
<text x="819.5" y="329" font-size="11.6" fill="#252423" font-weight="normal" text-anchor="start" textLength="31" lengthAdjust="spacingAndGlyphs" >Group</text>
<rect x="811.5" y="338.5" width="169" height="36.0" fill="#ffffff" stroke="#b3b0ad" stroke-width="1" stroke-dasharray="3,2"/>
<rect x="814.5" y="342.5" width="163" height="22.0" fill="#edebe9" stroke="#c8c6c4" stroke-width="1" rx="2" />
<text x="819.5" y="357.7" font-size="11.6" fill="#252423" font-weight="normal" text-anchor="start" textLength="52" lengthAdjust="spacingAndGlyphs" >Weeknum</text>
<path d="M947.5,351.0 L953,356.5 L958.5,351.0" stroke="#605e5c" fill="none" stroke-width="1.1" />
<path d="M965,350.5 L972.5,357.5 M972.5,350.5 L965,357.5" stroke="#605e5c" fill="none" stroke-width="1.1" />
<text x="819.5" y="398" font-size="11.6" fill="#252423" font-weight="normal" text-anchor="start" textLength="37" lengthAdjust="spacingAndGlyphs" >Details</text>
<rect x="811.5" y="407.5" width="169" height="27.0" fill="#ffffff" stroke="#b3b0ad" stroke-width="1" stroke-dasharray="3,2"/>
<text x="822" y="425.8" font-size="11.6" fill="#252423" font-weight="normal" text-anchor="start" textLength="106" lengthAdjust="spacingAndGlyphs" >Add data fields here</text>
<text x="819.5" y="457.5" font-size="11.6" fill="#252423" font-weight="normal" text-anchor="start" textLength="34" lengthAdjust="spacingAndGlyphs" >Values</text>
<rect x="811.5" y="467.5" width="169" height="36.0" fill="#ffffff" stroke="#b3b0ad" stroke-width="1" stroke-dasharray="3,2"/>
<rect x="814.5" y="471.5" width="163" height="22.0" fill="#edebe9" stroke="#c8c6c4" stroke-width="1" rx="2" />
<text x="819.5" y="486.7" font-size="11.6" fill="#252423" font-weight="normal" text-anchor="start" textLength="81" lengthAdjust="spacingAndGlyphs" >Loan_disbursed</text>
<path d="M947.5,480.0 L953,485.5 L958.5,480.0" stroke="#605e5c" fill="none" stroke-width="1.1" />
<path d="M965,479.5 L972.5,486.5 M972.5,479.5 L965,486.5" stroke="#605e5c" fill="none" stroke-width="1.1" />
<text x="819.5" y="527.5" font-size="11.6" fill="#252423" font-weight="normal" text-anchor="start" textLength="42" lengthAdjust="spacingAndGlyphs" >Tooltips</text>
<rect x="811.5" y="536.5" width="169" height="27.0" fill="#ffffff" stroke="#b3b0ad" stroke-width="1" stroke-dasharray="3,2"/>
<text x="822" y="555" font-size="11.6" fill="#252423" font-weight="normal" text-anchor="start" textLength="106" lengthAdjust="spacingAndGlyphs" >Add data fields here</text>
<text x="821.5" y="594.2" font-size="16.5" fill="#3b3a39" font-weight="normal" text-anchor="start" textLength="92" lengthAdjust="spacingAndGlyphs" stroke="#3b3a39" stroke-width="0.35">Drill through</text>
<text x="816.3" y="624.5" font-size="11.6" fill="#252423" font-weight="normal" text-anchor="start" textLength="66" lengthAdjust="spacingAndGlyphs" >Cross-report</text>
<text x="1000.5" y="109.6" font-size="14.5" fill="#323130" font-weight="normal" text-anchor="start" textLength="41" lengthAdjust="spacingAndGlyphs" stroke="#323130" stroke-width="0.45">Fields</text>
<rect x="992.5" y="132.5" width="160" height="29" fill="#ffffff" stroke="#a19f9d" stroke-width="1" rx="2" />
<circle cx="1013.8" cy="143.7" r="4.6" fill="none" stroke="#323130" stroke-width="1.1"/>
<path d="M1010.5,147 L1004,153.5" stroke="#323130" fill="none" stroke-width="1.1" />
<text x="1028" y="152" font-size="11.6" fill="#323130" font-weight="normal" text-anchor="start" textLength="38" lengthAdjust="spacingAndGlyphs" >Search</text>
<rect x="988" y="166" width="134" height="1" fill="#e1dfdd" rx="0" />
<path d="M992,193 L998,187.5 L1004,193" stroke="#605e5c" fill="none" stroke-width="1" />
<g stroke="#252423" stroke-width="1" fill="#ffffff"><rect x="1011.5" y="185.5" width="12" height="10"/></g>
<rect x="1011.5" y="185.5" width="12" height="2.5" fill="#323130" rx="0" />
<path d="M1011.5,190.5 H1023.5 M1011.5,193 H1023.5 M1015.5,188 V195.5 M1019.5,188 V195.5" stroke="#323130" fill="none" stroke-width="0.9" />
<circle cx="1024.2" cy="196.8" r="5.6" fill="#f2c811"/>
<path d="M1021.8,196.9 L1023.6,198.7 L1026.8,195.3" stroke="#252423" fill="none" stroke-width="1.1" />
<text x="1036.5" y="192.8" font-size="11.6" fill="#323130" font-weight="normal" text-anchor="start" textLength="38" lengthAdjust="spacingAndGlyphs" stroke="#323130" stroke-width="0.35">BIData</text>
<rect x="1020.5" y="213.5" width="11.3" height="11.3" fill="none" stroke="#605e5c" stroke-width="1" rx="1.5" />
<path d="M1045.5,215 H1037.5 L1041.5,219 L1037.5,223.3 H1045.5" stroke="#252423" fill="none" stroke-width="1.3" />
<text x="1057.5" y="224" font-size="11.6" fill="#252423" font-weight="normal" text-anchor="start" >Age</text>
<rect x="1020.5" y="237.5" width="11.3" height="11.3" fill="none" stroke="#605e5c" stroke-width="1" rx="1.5" />
<rect x="1037.5" y="238.5" width="10" height="10" fill="none" stroke="#252423" stroke-width="1" rx="0" />
<rect x="1037.5" y="238.5" width="10" height="2.3" fill="#252423" rx="0" />
<path d="M1039.5,236.5 V239.5 M1045.5,236.5 V239.5" stroke="#252423" fill="none" stroke-width="1" />
<rect x="1039.0" y="242.5" width="1.4" height="1.3" fill="#252423" rx="0" />
<rect x="1039.0" y="244.7" width="1.4" height="1.3" fill="#252423" rx="0" />
<rect x="1039.0" y="246.9" width="1.4" height="1.3" fill="#252423" rx="0" />
<rect x="1041.8" y="242.5" width="1.4" height="1.3" fill="#252423" rx="0" />
<rect x="1041.8" y="244.7" width="1.4" height="1.3" fill="#252423" rx="0" />
<rect x="1041.8" y="246.9" width="1.4" height="1.3" fill="#252423" rx="0" />
<rect x="1044.6" y="242.5" width="1.4" height="1.3" fill="#252423" rx="0" />
<rect x="1044.6" y="244.7" width="1.4" height="1.3" fill="#252423" rx="0" />
<rect x="1044.6" y="246.9" width="1.4" height="1.3" fill="#252423" rx="0" />
<text x="1057.5" y="248" font-size="11.6" fill="#252423" font-weight="normal" text-anchor="start" >Date</text>
<rect x="1020.5" y="261.5" width="11.3" height="11.3" fill="none" stroke="#605e5c" stroke-width="1" rx="1.5" />
<path d="M1045.5,263 H1037.5 L1041.5,267 L1037.5,271.3 H1045.5" stroke="#252423" fill="none" stroke-width="1.3" />
<text x="1057.5" y="272" font-size="11.6" fill="#252423" font-weight="normal" text-anchor="start" >Day_month</text>
<rect x="1020.5" y="285.5" width="11.3" height="11.3" fill="none" stroke="#605e5c" stroke-width="1" rx="1.5" />
<text x="1057.5" y="296" font-size="11.6" fill="#252423" font-weight="normal" text-anchor="start" >Education_l..</text>
<rect x="1020.5" y="309.5" width="11.3" height="11.3" fill="none" stroke="#605e5c" stroke-width="1" rx="1.5" />
<path d="M1045.5,311 H1037.5 L1041.5,315 L1037.5,319.3 H1045.5" stroke="#252423" fill="none" stroke-width="1.3" />
<text x="1057.5" y="320" font-size="11.6" fill="#252423" font-weight="normal" text-anchor="start" >Feedback</text>
<rect x="1020.5" y="333.5" width="11.3" height="11.3" fill="none" stroke="#605e5c" stroke-width="1" rx="1.5" />
<text x="1057.5" y="344" font-size="11.6" fill="#252423" font-weight="normal" text-anchor="start" >Gender</text>
<rect x="1020.5" y="357.5" width="11.3" height="11.3" fill="none" stroke="#605e5c" stroke-width="1" rx="1.5" />
<path d="M1045.5,359 H1037.5 L1041.5,363 L1037.5,367.3 H1045.5" stroke="#252423" fill="none" stroke-width="1.3" />
<text x="1057.5" y="368" font-size="11.6" fill="#252423" font-weight="normal" text-anchor="start" >Income</text>
<rect x="1020.5" y="381.5" width="11.3" height="11.3" fill="none" stroke="#605e5c" stroke-width="1" rx="1.5" />
<path d="M1045.5,383 H1037.5 L1041.5,387 L1037.5,391.3 H1045.5" stroke="#252423" fill="none" stroke-width="1.3" />
<text x="1057.5" y="392" font-size="11.6" fill="#252423" font-weight="normal" text-anchor="start" >Interest_rate</text>
<rect x="1020" y="405" width="12.3" height="12.3" fill="#f2c811" rx="2" />
<path d="M1023,411.2 L1025.3,413.5 L1029.3,409" stroke="#323130" fill="none" stroke-width="1.1" />
<path d="M1045.5,407 H1037.5 L1041.5,411 L1037.5,415.3 H1045.5" stroke="#252423" fill="none" stroke-width="1.3" />
<text x="1057.5" y="416" font-size="11.6" fill="#252423" font-weight="normal" text-anchor="start" >Loan_disbu..</text>
<rect x="1020.5" y="429.5" width="11.3" height="11.3" fill="none" stroke="#605e5c" stroke-width="1" rx="1.5" />
<text x="1057.5" y="440" font-size="11.6" fill="#252423" font-weight="normal" text-anchor="start" >Month</text>
<rect x="1020.5" y="453.5" width="11.3" height="11.3" fill="none" stroke="#605e5c" stroke-width="1" rx="1.5" />
<rect x="1036.5" y="453.5" width="4" height="3.5" fill="#f2c811" stroke="#323130" stroke-width="0.8" rx="0" />
<rect x="1042.5" y="457.5" width="4.5" height="3.5" fill="#f2c811" stroke="#323130" stroke-width="0.8" rx="0" />
<rect x="1042.5" y="461.5" width="4.5" height="3.5" fill="#f2c811" stroke="#323130" stroke-width="0.8" rx="0" />
<path d="M1039.5,458 V460 M1038.5,459 H1040.5 M1039.5,462 V464 M1038.5,463 H1040.5" stroke="#252423" fill="none" stroke-width="0.9" />
<text x="1057.5" y="464" font-size="11.6" fill="#252423" font-weight="normal" text-anchor="start" >Month Hier..</text>
<rect x="1020.5" y="477.5" width="11.3" height="11.3" fill="none" stroke="#605e5c" stroke-width="1" rx="1.5" />
<path d="M1045.5,479 H1037.5 L1041.5,483 L1037.5,487.3 H1045.5" stroke="#252423" fill="none" stroke-width="1.3" />
<text x="1057.5" y="488" font-size="11.6" fill="#252423" font-weight="normal" text-anchor="start" >Outstandin..</text>
<rect x="1020.5" y="501.5" width="11.3" height="11.3" fill="none" stroke="#605e5c" stroke-width="1" rx="1.5" />
<path d="M1045.5,503 H1037.5 L1041.5,507 L1037.5,511.3 H1045.5" stroke="#252423" fill="none" stroke-width="1.3" />
<text x="1057.5" y="512" font-size="11.6" fill="#252423" font-weight="normal" text-anchor="start" >Promo_Ca..</text>
<rect x="1020.5" y="525.5" width="11.3" height="11.3" fill="none" stroke="#605e5c" stroke-width="1" rx="1.5" />
<text x="1057.5" y="536" font-size="11.6" fill="#252423" font-weight="normal" text-anchor="start" >Purpose</text>
<rect x="1020.5" y="549.5" width="11.3" height="11.3" fill="none" stroke="#605e5c" stroke-width="1" rx="1.5" />
<path d="M1045.5,551 H1037.5 L1041.5,555 L1037.5,559.3 H1045.5" stroke="#252423" fill="none" stroke-width="1.3" />
<text x="1057.5" y="560" font-size="11.6" fill="#252423" font-weight="normal" text-anchor="start" >Quarter</text>
<rect x="1020.5" y="573.5" width="11.3" height="11.3" fill="none" stroke="#605e5c" stroke-width="1" rx="1.5" />
<text x="1057.5" y="584" font-size="11.6" fill="#252423" font-weight="normal" text-anchor="start" >Weekday</text>
<rect x="1020" y="597" width="12.3" height="12.3" fill="#f2c811" rx="2" />
<path d="M1023,603.2 L1025.3,605.5 L1029.3,601" stroke="#323130" fill="none" stroke-width="1.1" />
<text x="1057.5" y="608" font-size="11.6" fill="#252423" font-weight="normal" text-anchor="start" >Weeknum</text>
<rect x="1020.5" y="621.5" width="11.3" height="11.3" fill="none" stroke="#605e5c" stroke-width="1" rx="1.5" />
<path d="M1000,240 L1006,246 L1012,240" stroke="#605e5c" fill="none" stroke-width="1" />
<path d="M1000,456 L1006,462 L1012,456" stroke="#605e5c" fill="none" stroke-width="1" />
<rect x="0" y="622" width="1122" height="9" fill="#f3f2f1" rx="0" />
<rect x="0" y="622" width="1122" height="1" fill="#d2d0ce" rx="0" />
<text x="970.5" y="637.5" font-size="12" fill="#323130" font-weight="normal" text-anchor="start" >Update available (click to download)</text>
</svg></body></html>
